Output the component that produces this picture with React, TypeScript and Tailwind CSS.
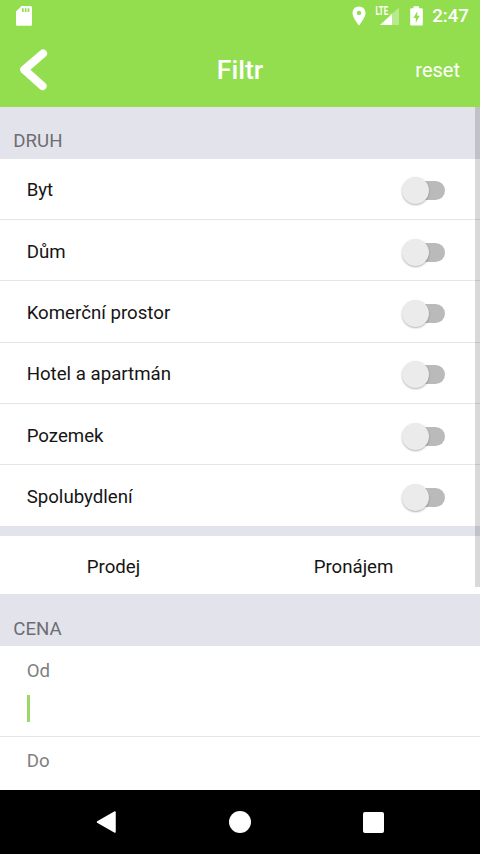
const kinds = ['Byt', 'Dům', 'Komerční prostor', 'Hotel a apartmán', 'Pozemek', 'Spolubydlení']

function StatusBar() {
  return (
    <div className="flex h-8 items-center justify-between pl-4 pr-[11px]">
      <svg className="h-5 w-4" viewBox="0 0 16 20">
        <path
          fillRule="evenodd"
          fill="#fff"
          d="M5.5 0H14.5Q16 0 16 1.5V18.2Q16 19.7 14.5 19.7H1.5Q0 19.7 0 18.2V5.5ZM6 2.2V6H7.7V2.2ZM8.8 2.2V6H10.5V2.2ZM11.6 2.2V6H13.3V2.2Z"
        />
      </svg>
      <div className="flex items-center">
        <svg className="h-8 w-[72px] overflow-visible" viewBox="0 -6 72 32">
          <path
            fillRule="evenodd"
            fill="#fff"
            d="M7 .5C3.2 .5 .5 3.3 .5 7C.5 11.8 7 19.5 7 19.5S13.5 11.8 13.5 7C13.5 3.3 10.8 .5 7 .5ZM7 4.7A2.2 2.2 0 1 1 7 9.1A2.2 2.2 0 1 1 7 4.7Z"
          />
          <text x="23.5" y="9.2" textLength="12.5" lengthAdjust="spacingAndGlyphs" fill="#fff" className="font-[Roboto,sans-serif] text-[12px] font-bold">
            LTE
          </text>
          <path d="M47 1.5V19H28L37.5 10V8L41 7Z" fill="#fff" fillOpacity=".35" />
          <path d="M40 8.2V19H28Z" fill="#fff" />
          <path
            fillRule="evenodd"
            fill="#fff"
            d="M61.5 .2H67V2.2H69.6Q70.8 2.2 70.8 3.4V18.4Q70.8 19.6 69.6 19.6H59.4Q58.2 19.6 58.2 18.4V3.4Q58.2 2.2 59.4 2.2H61.5ZM65.3 5.2L61.3 12H63.8V16.8L67.8 9.8H65.3Z"
          />
        </svg>
        <span className="ml-2 text-[18.7px] leading-8 font-medium">2:47</span>
      </div>
    </div>
  )
}

function Header() {
  return (
    <header className="h-[106.5px] shrink-0 bg-[#92de4f] text-white">
      <StatusBar />
      <div className="grid h-[74px] grid-cols-3 items-center px-5">
        <svg className="h-[42px] w-7 translate-y-px" viewBox="0 0 28 42" fill="none">
          <path d="M23 4.5L4.3 20.7L22.5 37" stroke="#fff" strokeWidth="8.2" strokeLinecap="round" strokeLinejoin="round" />
        </svg>
        <h1 className="pt-0.5 text-center text-[26.67px] font-medium">Filtr</h1>
        <button className="pt-0.5 text-right text-[20px]">reset</button>
      </div>
    </header>
  )
}

function SectionTitle({ title }: { title: string }) {
  return (
    <h2 className="flex h-[52px] items-center bg-[#e3e3eb] pt-[17px] pl-[13.3px] text-[18.67px] text-[#6d6d72]">
      {title}
    </h2>
  )
}

function Toggle() {
  return (
    <span className="flex w-[43px] items-center pt-px">
      <span className="z-10 size-[27px] rounded-full bg-[#ebebeb] shadow-[0_1px_2px_rgba(0,0,0,0.3)]" />
      <span className="-ml-3.5 h-[19px] w-[30px] rounded-full bg-[#bababa]" />
    </span>
  )
}

export default function App() {
  return (
    <div className="flex h-[854px] w-[480px] flex-col overflow-hidden bg-white font-[Roboto,sans-serif] text-[18.67px] text-[#151515]">
      <Header />

      <main className="relative flex-1 overflow-hidden">
        <SectionTitle title="DRUH" />
        {kinds.map((kind) => (
          <div key={kind} className="flex h-[61.4px] items-center justify-between border-b border-[#e6e6e8] pr-[35px] pl-[26.67px] pt-[3px]">
            <span>{kind}</span>
            <Toggle />
          </div>
        ))}

        {/* Sale or rent */}
        <div className="-mt-px h-[10px] bg-[#e3e3eb]" />
        <div className="grid h-[58.5px] grid-cols-2 items-center pt-[3px] text-center">
          <button className="pr-[13px]">Prodej</button>
          <button className="pr-[13px]">Pronájem</button>
        </div>

        <SectionTitle title="CENA" />
        <div className="h-[91px] border-b border-[#e6e6e8] pt-[11px] pl-[26.67px] text-[#808080]">
          <div className="leading-7">Od</div>
          <div className="mt-[10px] h-[27px] w-[3px] bg-[#9bd865]" />
        </div>
        <div className="pt-2.5 pl-[26.67px] leading-7 text-[#808080]">Do</div>

        {/* Scroll indicator */}
        <div className="absolute top-0 right-0 h-[480px] w-[5.5px] bg-black/15" />
      </main>

      <nav className="flex h-16 shrink-0 items-center justify-between bg-black px-[96px]">
        <svg className="h-[22px] w-5" viewBox="0 0 20 22">
          <path d="M19 1V21L1.5 11Z" fill="#fff" stroke="#fff" strokeWidth="1.5" strokeLinejoin="round" />
        </svg>
        <span className="size-[22px] rounded-full bg-white" />
        <span className="size-[21px] rounded-[2px] bg-white" />
      </nav>
    </div>
  )
}
